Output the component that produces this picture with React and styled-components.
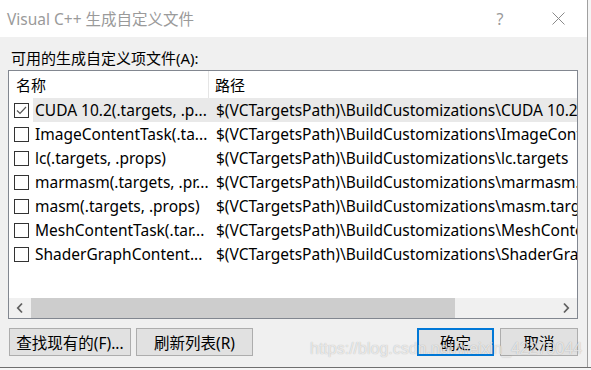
import styled, { createGlobalStyle } from "styled-components";

const GlobalStyle = createGlobalStyle`
  body {
    margin: 0;
    background: #f3f3f3;
    font-family: "Segoe UI", "Noto Sans", "Noto Sans CJK SC", sans-serif;
  }
`;

const Page = styled.div`
  width: 591px;
  height: 370px;
  overflow: hidden;
  display: flex;
  flex-direction: column;
`;

const Desk = styled.div`
  display: flex;
`;

const Dialog = styled.div`
  position: relative;
  width: 587px;
  height: 367px;
  background: #f0f0f0;
  display: flex;
  flex-direction: column;
  flex-shrink: 0;
`;

const Behind = styled.div`
  flex: 1;
  border-left: 1px solid #a0a0a0;
  background: #f5f5f5;
`;

const BottomEdge = styled.div`
  flex: 1;
  border-top: 1px solid #6f6f6f;
  background: #f6f6f6;
`;

const TitleBar = styled.div`
  height: 37px;
  background: #fff;
  display: flex;
  align-items: center;
  padding-left: 7px;
  font-size: 15.5px;
  color: #9a9a9a;
`;

const Title = styled.span`
  flex: 1;
`;

const TitleButton = styled.span`
  width: 58px;
  display: flex;
  justify-content: center;
  align-items: center;
  color: #9a9a9a;
  font-size: 16px;
`;

const Body = styled.div`
  flex: 1;
  display: flex;
  flex-direction: column;
  padding: 11px 9px 0 8px;
`;

const Label = styled.div`
  font-size: 15px;
  line-height: 20px;
  height: 22px;
  padding-left: 3px;
  color: #000;
`;

const ListBox = styled.div`
  height: 249px;
  box-sizing: border-box;
  border: 1px solid #828790;
  background: #fff;
  display: flex;
  flex-direction: column;
  overflow: hidden;
`;

const Header = styled.div`
  height: 27px;
  display: flex;
  align-items: center;
  font-size: 15px;
  color: #000;
`;

const HeadCell = styled.div`
  width: ${({ $w }) => $w || "auto"};
  flex: ${({ $w }) => ($w ? "none" : 1)};
  height: 100%;
  display: flex;
  align-items: center;
  box-sizing: border-box;
  padding-left: ${({ $pl }) => $pl};
  border-right: ${({ $divider }) => ($divider ? "1px solid #e5e5e5" : "none")};
`;

const Rows = styled.div`
  flex: 1;
`;

const Row = styled.div`
  height: 24px;
  display: flex;
  align-items: center;
  font-size: 15.5px;
  color: #000;
  white-space: nowrap;
  overflow: hidden;
`;

const CheckCell = styled.div`
  width: 19px;
  padding-left: 5px;
  display: flex;
  align-items: center;
  flex-shrink: 0;
`;

const Box = styled.div`
  width: 15px;
  height: 15px;
  box-sizing: border-box;
  border: 1px solid #333;
  background: #fff;
  display: flex;
  align-items: center;
  justify-content: center;
`;

const RowBody = styled.div`
  flex: 1;
  height: 100%;
  display: flex;
  align-items: center;
  overflow: hidden;
  background: ${({ $selected }) => ($selected ? "#e9e9e9" : "transparent")};
`;

const NameCell = styled.div`
  width: 181px;
  padding-left: 2px;
  flex-shrink: 0;
  overflow: hidden;
`;

const PathCell = styled.div`
  flex: 1;
  overflow: hidden;
`;

const HScroll = styled.div`
  height: 20px;
  display: flex;
  background: #f0f0f0;
`;

const Arrow = styled.div`
  width: 22px;
  display: flex;
  align-items: center;
  justify-content: center;
`;

const Track = styled.div`
  flex: 1;
  display: flex;
`;

const Thumb = styled.div`
  width: 424px;
  background: #cdcdcd;
`;

const Buttons = styled.div`
  margin-top: 9px;
  display: flex;
  justify-content: space-between;
  padding-left: 1px;
`;

const Group = styled.div`
  display: flex;
  gap: ${({ $gap }) => $gap};
`;

const Button = styled.div`
  width: ${({ $w }) => $w};
  height: 28px;
  box-sizing: border-box;
  border: ${({ $default }) => ($default ? "2px solid #0078d7" : "1px solid #adadad")};
  background: #e1e1e1;
  display: flex;
  align-items: center;
  justify-content: center;
  font-size: 15.5px;
  color: #000;
`;

const Watermark = styled.div`
  position: absolute;
  left: 310px;
  top: 340px;
  font-family: "Liberation Sans", Arial, sans-serif;
  font-size: 16px;
  color: rgba(255, 255, 255, 0.7);
  text-shadow: 0 0 1px rgba(0, 0, 0, 0.3);
  pointer-events: none;
`;

const items = [
  { name: "CUDA 10.2(.targets, .p...", path: "$(VCTargetsPath)\\BuildCustomizations\\CUDA 10.2.targets", checked: true },
  { name: "ImageContentTask(.ta...", path: "$(VCTargetsPath)\\BuildCustomizations\\ImageContentTask.targets" },
  { name: "lc(.targets, .props)", path: "$(VCTargetsPath)\\BuildCustomizations\\lc.targets" },
  { name: "marmasm(.targets, .pr...", path: "$(VCTargetsPath)\\BuildCustomizations\\marmasm.targets" },
  { name: "masm(.targets, .props)", path: "$(VCTargetsPath)\\BuildCustomizations\\masm.targets" },
  { name: "MeshContentTask(.tar...", path: "$(VCTargetsPath)\\BuildCustomizations\\MeshContentTask.targets" },
  { name: "ShaderGraphContent...", path: "$(VCTargetsPath)\\BuildCustomizations\\ShaderGraphContentTask.targets" },
];

const Check = () => (
  <svg width="11" height="9" viewBox="0 0 11 9">
    <polyline points="1,4.5 4,7.5 10,1" fill="none" stroke="#555" strokeWidth="1.2" />
  </svg>
);

const Chevron = ({ dir }) => (
  <svg width="8" height="12" viewBox="0 0 8 12">
    <polyline
      points={dir === "left" ? "6,1.5 1.8,6 6,10.5" : "2,1.5 6.2,6 2,10.5"}
      fill="none"
      stroke="#606060"
      strokeWidth="1.8"
    />
  </svg>
);

const Close = () => (
  <svg width="13" height="13" viewBox="0 0 13 13">
    <path d="M0.5 0.5 L12.5 12.5 M12.5 0.5 L0.5 12.5" stroke="#8a8a8a" strokeWidth="1" />
  </svg>
);

export default function App() {
  return (
    <Page>
      <GlobalStyle />
      <Desk>
        <Dialog>
          <TitleBar>
            <Title>Visual C++ 生成自定义文件</Title>
            <TitleButton>?</TitleButton>
            <TitleButton>
              <Close />
            </TitleButton>
          </TitleBar>
          <Body>
            <Label>可用的生成自定义项文件(A):</Label>
            <ListBox>
              <Header>
                <HeadCell $w="200px" $pl="7px" $divider>名称</HeadCell>
                <HeadCell $pl="6px">路径</HeadCell>
              </Header>
              <Rows>
                {items.map((it) => (
                  <Row key={it.name}>
                    <CheckCell>
                      <Box>{it.checked && <Check />}</Box>
                    </CheckCell>
                    <RowBody $selected={it.checked}>
                      <NameCell>{it.name}</NameCell>
                      <PathCell>{it.path}</PathCell>
                    </RowBody>
                  </Row>
                ))}
              </Rows>
              <HScroll>
                <Arrow>
                  <Chevron dir="left" />
                </Arrow>
                <Track>
                  <Thumb />
                </Track>
                <Arrow>
                  <Chevron dir="right" />
                </Arrow>
              </HScroll>
            </ListBox>
            <Buttons>
              <Group $gap="5px">
                <Button $w="122px">查找现有的(F)...</Button>
                <Button $w="117px">刷新列表(R)</Button>
              </Group>
              <Group $gap="6px">
                <Button $w="77px" $default>确定</Button>
                <Button $w="78px">取消</Button>
              </Group>
            </Buttons>
          </Body>
          <Watermark>https://blog.csdn.net/weixin_42279044</Watermark>
        </Dialog>
        <Behind />
      </Desk>
      <BottomEdge />
    </Page>
  );
}
